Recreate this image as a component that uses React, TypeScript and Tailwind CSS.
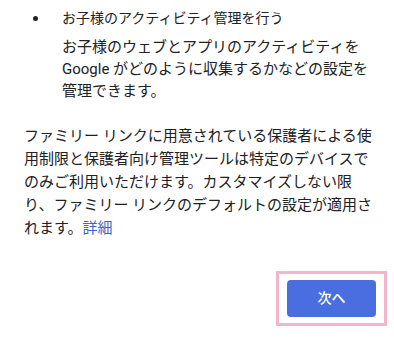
import React from 'react'

const App = () => {
  return (
    <div className="w-[394px] h-[346px] bg-white text-[#202124] font-['Roboto','Noto_Sans_CJK_JP',sans-serif] antialiased overflow-hidden">
      <div className="flex pt-[7px] pl-[33px]">
        <span className="w-[29px] h-[22px] flex items-center">
          <span className="block w-[5px] h-[5px] rounded-full bg-[#202124]" />
        </span>
        <div>
          <p className="text-[14px] leading-[22px]">お子様のアクティビティ管理を行う</p>
          <p className="mt-[7px] w-[312px] text-[15px] leading-[22px]">
            お子様のウェブとアプリのアクティビティを Google がどのように収集するかなどの設定を管理できます。
          </p>
        </div>
      </div>
      <p className="mt-[23px] ml-[24px] w-[351px] text-[15px] leading-[23px]">
        ファミリー リンクに用意されている保護者による使用制限と保護者向け管理ツールは特定のデバイスでのみご利用いただけます。カスタマイズしない限り、ファミリー リンクのデフォルトの設定が適用されます。<a className="text-[#3f5fd1]">詳細</a>
      </p>
      <div className="flex justify-end mt-[31px] pr-[7px]">
        <div className="border-[3px] border-[#f4b4cc] px-[8px] pt-[6px] pb-[6px]">
          <button className="w-[89px] h-[37px] rounded-[4px] bg-[#4a6ee0] text-white text-[14px] font-medium">
            次へ
          </button>
        </div>
      </div>
    </div>
  )
}

export default App
